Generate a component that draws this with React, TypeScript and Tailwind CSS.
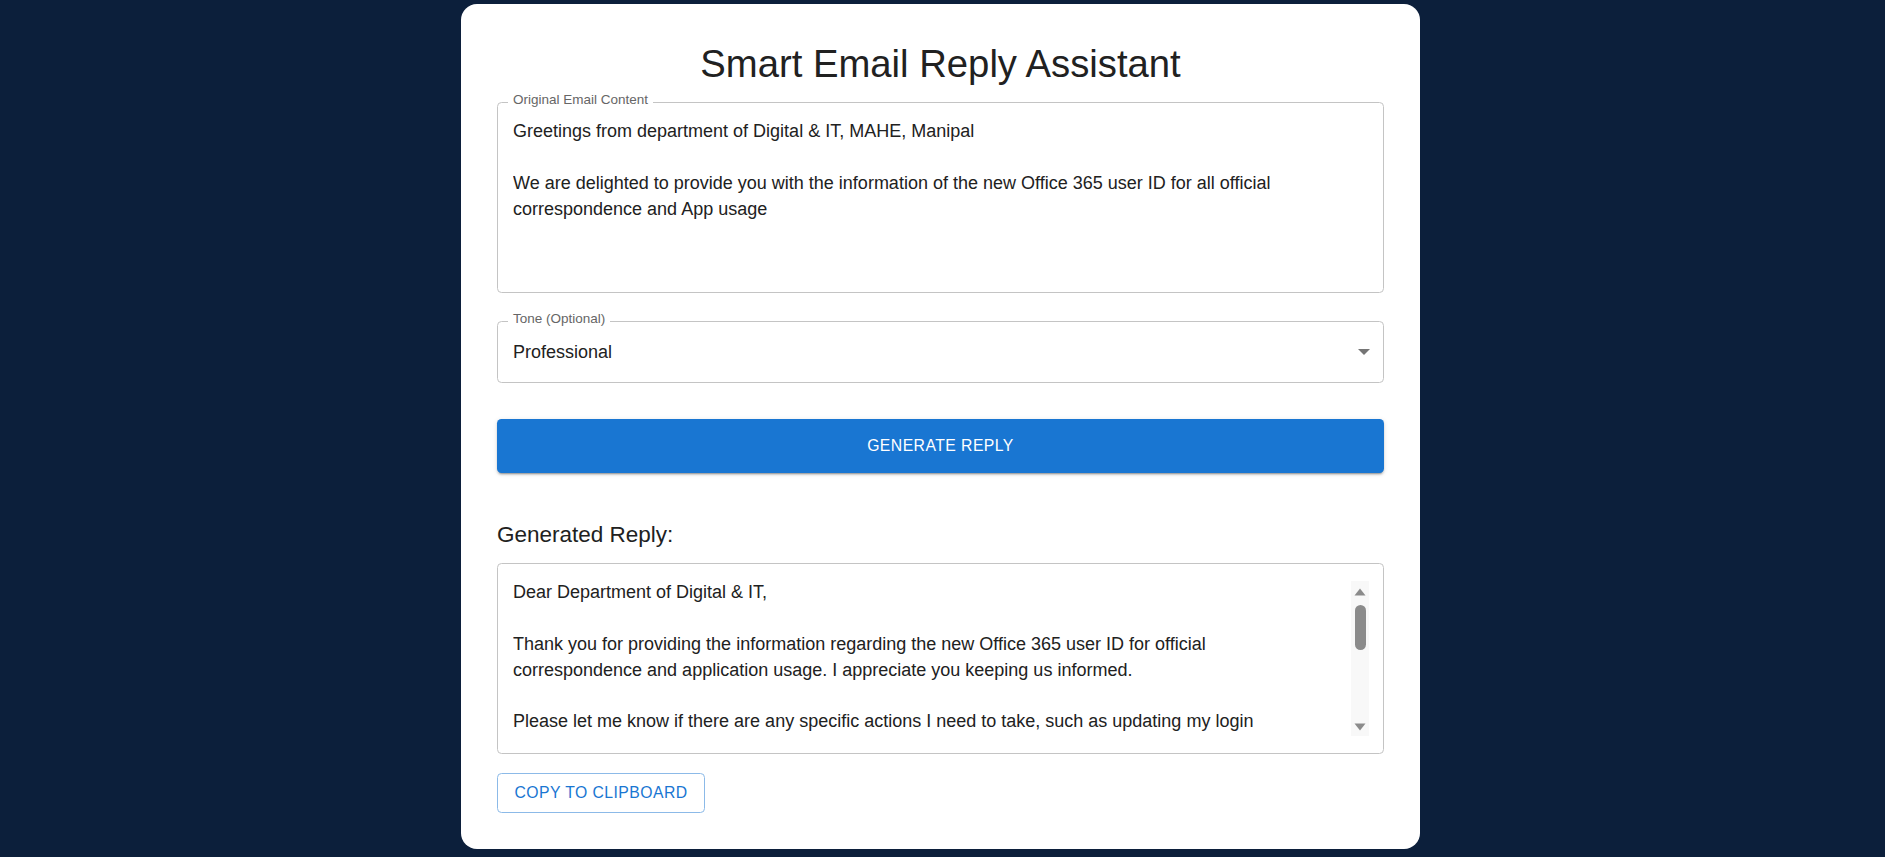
const originalEmail = `Greetings from department of Digital & IT, MAHE, Manipal

We are delighted to provide you with the information of the new Office 365 user ID for all official
correspondence and App usage`

const generatedReply = `Dear Department of Digital & IT,

Thank you for providing the information regarding the new Office 365 user ID for official
correspondence and application usage. I appreciate you keeping us informed.

Please let me know if there are any specific actions I need to take, such as updating my login`

function FieldLabel({ text }: { text: string }) {
  return (
    <span className="absolute left-[10px] top-[-10px] bg-white px-[5px] text-[13.5px] leading-[13.5px] text-[#666666]">
      {text}
    </span>
  )
}

function ScrollTrack() {
  return (
    <div className="flex h-[155px] w-[18px] shrink-0 flex-col items-center bg-[#f8f8f8]">
      {/* up arrow */}
      <svg width="12" height="8" viewBox="0 0 12 8" className="mt-[7px]">
        <path d="M6 0.5 L11.5 7.5 L0.5 7.5 Z" fill="#8b8b8b" />
      </svg>
      {/* thumb */}
      <div className="mt-[9px] h-[45px] w-[11px] rounded-full bg-[#8b8b8b]" />
      <div className="flex-1" />
      {/* down arrow */}
      <svg width="12" height="8" viewBox="0 0 12 8" className="mb-[5px]">
        <path d="M0.5 0.5 L11.5 0.5 L6 7.5 Z" fill="#8b8b8b" />
      </svg>
    </div>
  )
}

export default function App() {
  return (
    <div
      className="flex min-h-screen justify-center bg-[#0c1f3b] pt-[4px] pr-[4px]"
      style={{ fontFamily: '"Liberation Sans", Arial, sans-serif' }}
    >
      <div className="h-fit w-[959px] rounded-[16px] bg-white px-[36px] pt-[36px] pb-[36px] text-[#212121]">
        {/* Title */}
        <h1 className="text-center text-[38.25px] leading-[47px] font-normal">
          Smart Email Reply Assistant
        </h1>

        {/* Original email */}
        <div className="relative mt-[15px] h-[191px] rounded-[4.5px] border border-[#c4c4c4] pt-[16px] pl-[15px] pr-[15px]">
          <FieldLabel text="Original Email Content" />
          <div className="h-[156px] overflow-hidden whitespace-pre text-[18px] leading-[25.875px]">
            {originalEmail}
          </div>
        </div>

        {/* Tone select */}
        <div className="relative mt-[28px] flex h-[62px] items-center justify-between rounded-[4.5px] border border-[#c4c4c4] pl-[15px] pr-[13px]">
          <FieldLabel text="Tone (Optional)" />
          <span className="text-[18px] leading-[26px]">Professional</span>
          <svg width="12" height="6" viewBox="0 0 12 6">
            <path d="M0 0 L12 0 L6 6 Z" fill="#757575" />
          </svg>
        </div>

        {/* Generate */}
        <button className="mt-[36px] flex h-[54px] w-full items-center justify-center rounded-[4.5px] bg-[#1976d2] text-[15.75px] font-medium tracking-[0.45px] text-white uppercase shadow-[0px_3px_1px_-2px_rgba(0,0,0,0.2),0px_2px_2px_0px_rgba(0,0,0,0.14),0px_1px_5px_0px_rgba(0,0,0,0.12)]">
          Generate Reply
        </button>

        {/* Result */}
        <h2 className="mt-[44px] text-[22.5px] leading-[36px] font-normal">Generated Reply:</h2>
        <div className="mt-[10px] flex h-[191px] items-start rounded-[4.5px] border border-[#c4c4c4] pt-[17px] pl-[15px] pr-[14px]">
          <div className="-mt-[1px] h-[156px] flex-1 overflow-hidden whitespace-pre text-[18px] leading-[25.875px]">
            {generatedReply}
          </div>
          <ScrollTrack />
        </div>

        <button className="mt-[19px] flex h-[40px] w-[208px] items-center justify-center rounded-[4.5px] border border-[#8cbae8] text-[15.75px] font-medium tracking-[0.45px] text-[#1976d2] uppercase">
          Copy to Clipboard
        </button>
      </div>
    </div>
  )
}
